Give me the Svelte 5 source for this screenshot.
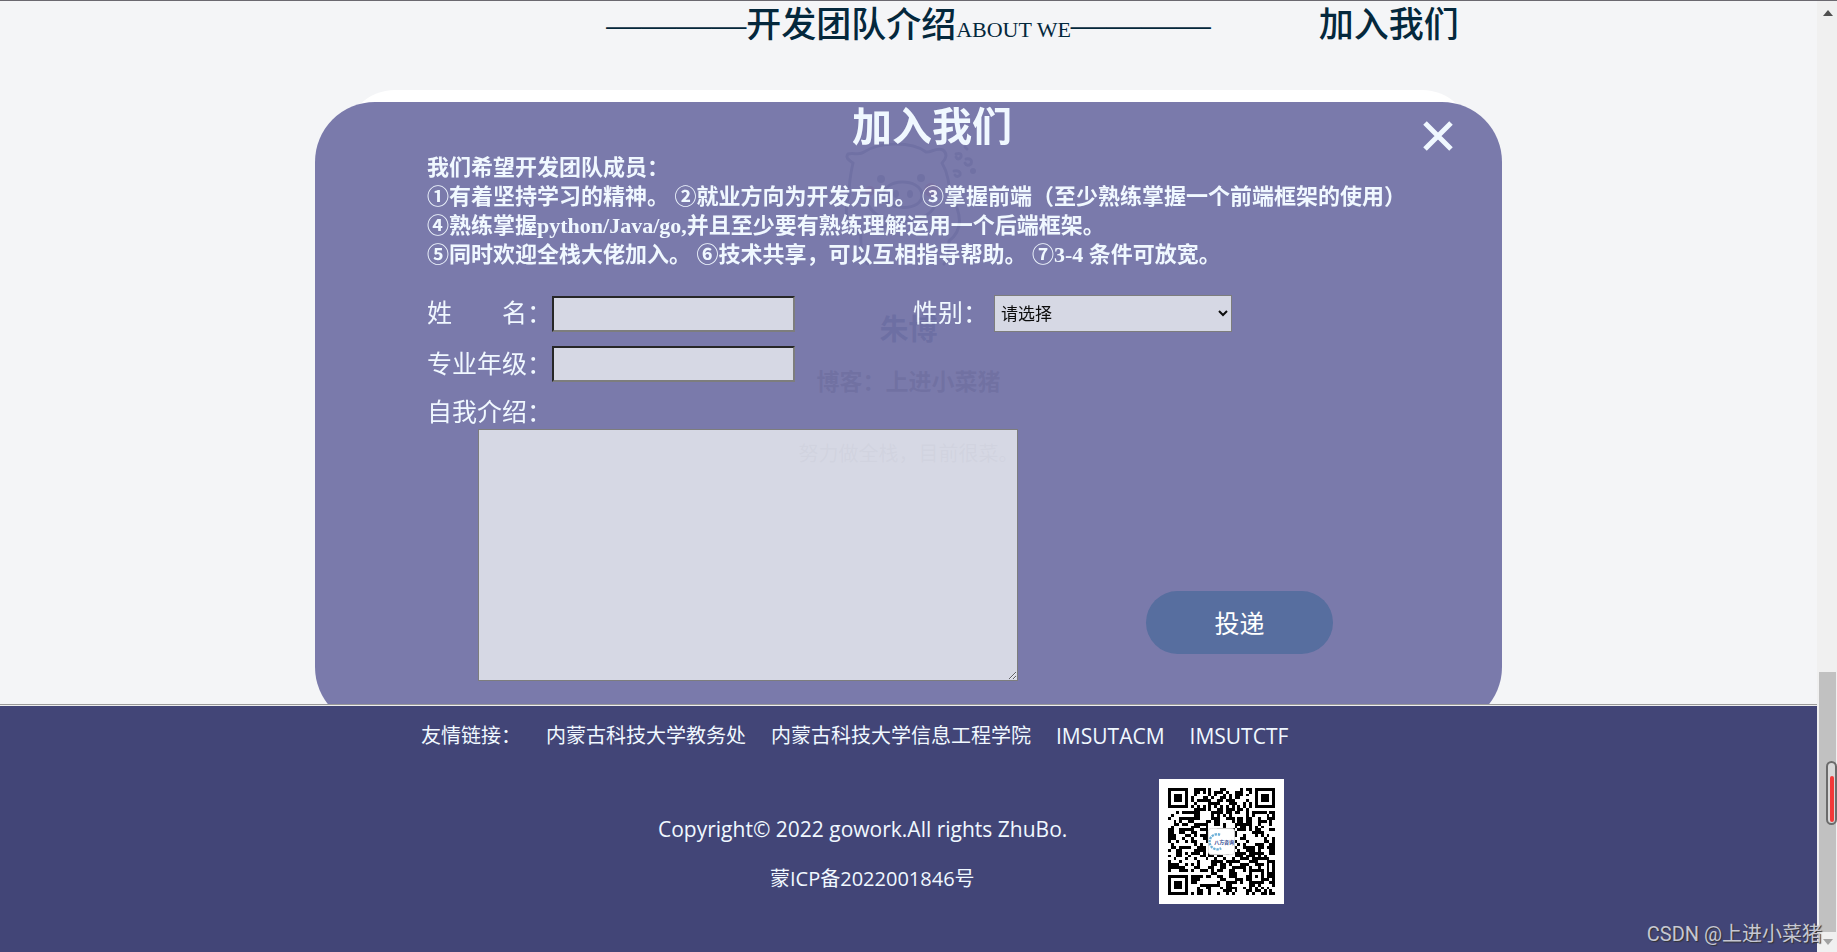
<script lang="ts">
	const links = ['内蒙古科技大学教务处', '内蒙古科技大学信息工程学院'];
	const clubs = ['IMSUTACM', 'IMSUTCTF'];

	const requirements = [
		'我们希望开发团队成员：',
		'①有着坚持学习的精神。 ②就业方向为开发方向。 ③掌握前端（至少熟练掌握一个前端框架的使用）',
		'④熟练掌握python/Java/go,并且至少要有熟练理解运用一个后端框架。',
		'⑤同时欢迎全栈大佬加入。 ⑥技术共享，可以互相指导帮助。 ⑦3-4 条件可放宽。'
	];

	const SIZE = 37;

	// square ring with a solid core, used by finder and alignment marks
	function ring(x: number, y: number, size: number) {
		const edge = x === 0 || y === 0 || x === size - 1 || y === size - 1;
		const core = x > 1 && y > 1 && x < size - 2 && y < size - 2;
		return edge || core;
	}

	function qrPath() {
		let seed = 2022001846;
		let d = '';
		for (let y = 0; y < SIZE; y++) {
			for (let x = 0; x < SIZE; x++) {
				seed = (Math.imul(seed, 1664525) + 1013904223) >>> 0;
				let on = seed >>> 16 & 1;
				const left = x < 8;
				const right = x > SIZE - 9;
				const top = y < 8;
				const bottom = y > SIZE - 9;
				if ((top && (left || right)) || (bottom && left)) {
					const fx = right ? x - (SIZE - 7) : x;
					const fy = bottom ? y - (SIZE - 7) : y;
					on = fx >= 0 && fx < 7 && fy >= 0 && fy < 7 && ring(fx, fy, 7) ? 1 : 0;
				} else if (x >= 28 && x <= 32 && y >= 28 && y <= 32) {
					on = ring(x - 28, y - 28, 5) ? 1 : 0;
				} else if (x === 6 || y === 6) {
					on = (x + y) % 2 ? 0 : 1;
				}
				if (on) d += `M${x} ${y}h1v1h-1z`;
			}
		}
		return d;
	}

	const qr = qrPath();

	let open = $state(true);
</script>

<div class="window">
	<div class="page">
		<main class="stage">
			<header class="heading">
				<h2>————开发团队介绍<small>ABOUT WE</small>————</h2>
				<a class="join" href="#join" onclick={() => (open = true)}>加入我们</a>
			</header>

			<section class="card">
				<svg class="avatar" width="140" height="140" viewBox="0 0 140 140" fill="none" aria-hidden="true">
					<g stroke="#1c2050" stroke-width="3" stroke-linecap="round" stroke-linejoin="round">
						<path d="M14 33C10 30 6 28 9 24C15 22 20 26 25 22C40 12 72 11 87 22C92 23 97 17 104 20C109 24 107 29 103 33C109 43 110 54 111 64C124 85 123 101 110 111C110 122 109 130 105 134M14 33C11 46 10 56 10 65C4 84 8 99 22 105C21 119 24 130 29 134" />
						<path d="M45 66C43 48 82 47 83 65C84 81 47 82 45 66Z" />
						<path d="M30 76C40 96 84 98 96 76M28 96C38 104 45 99 49 92" />
						<path d="M117 24q6-2 5 3q-3 4-5 0M127 29q7-1 5 5q-4 3-6-1M115 41q7-1 6 4q-3 3-5 0M126 17l2 2" />
					</g>
					<g fill="#1c2050">
						<circle cx="42" cy="49" r="4" />
						<circle cx="82" cy="48" r="4" />
						<ellipse cx="57" cy="64" rx="3" ry="4" />
						<ellipse cx="71" cy="64" rx="3" ry="4" />
						<circle cx="134" cy="41" r="3" />
					</g>
					<g fill="#e0405a">
						<circle cx="92" cy="60" r="7" />
						<circle cx="31" cy="61" r="5" />
					</g>
				</svg>
				<h3>朱博</h3>
				<p class="blog">博客：上进小菜猪</p>
				<p class="motto">努力做全栈，目前很菜。</p>
			</section>

			{#if open}
				<section class="modal" id="join">
					<button class="close" type="button" aria-label="关闭" onclick={() => (open = false)}>
						<svg width="30" height="30" viewBox="0 0 30 30">
							<path d="M2 2L28 28M28 2L2 28" stroke="currentColor" stroke-width="5" />
						</svg>
					</button>
					<h3>加入我们</h3>
					<div class="requirements">
						{#each requirements as line}
							<p>{line}</p>
						{/each}
					</div>
					<form onsubmit={(e) => e.preventDefault()}>
						<div class="row">
							<label class="name" for="name">姓　　名：</label>
							<input id="name" type="text" />
							<label class="sex" for="sex">性别：</label>
							<select id="sex">
								<option>请选择</option>
								<option>男</option>
								<option>女</option>
							</select>
						</div>
						<div class="row">
							<label class="name" for="major">专业年级：</label>
							<input id="major" type="text" />
						</div>
						<label class="intro" for="intro">自我介绍：</label>
						<div class="send">
							<textarea id="intro"></textarea>
							<button class="submit" type="submit">投递</button>
						</div>
					</form>
				</section>
			{/if}
		</main>

		<footer>
			<nav>
				<span>友情链接：</span>
				{#each links as link}
					<a href="#top">{link}</a>
				{/each}
				{#each clubs as club}
					<a class="club" href="#top">{club}</a>
				{/each}
			</nav>
			<div class="legal">
				<div class="copy">
					<p>Copyright© 2022 gowork.All rights ZhuBo.</p>
					<p class="icp">蒙ICP备2022001846号</p>
				</div>
				<svg class="qr" width="125" height="125" viewBox="-3 -3 43 43" role="img" aria-label="二维码">
					<rect x="-3" y="-3" width="43" height="43" fill="#fff" />
					<path d={qr} fill="#000" shape-rendering="crispEdges" />
					<rect x="14" y="14" width="9" height="9" rx="1" fill="#fff" stroke="#ddd" stroke-width="0.3" />
					<path d="M18 16.2a2.6 2.6 0 1 0 .4 4.6" fill="none" stroke="#6cb0d8" stroke-width="0.8" stroke-dasharray="0.8 0.3" />
					<text x="16" y="19.3" font-size="1.7" font-weight="700" fill="#2f3f8f">八方咨询</text>
				</svg>
			</div>
		</footer>
	</div>

	<div class="scrollbar" aria-hidden="true">
		<svg class="up" width="10" height="6" viewBox="0 0 10 6"><path d="M5 0L10 6H0z" /></svg>
		<div class="thumb"></div>
		<svg class="down" width="10" height="6" viewBox="0 0 10 6"><path d="M0 0H10L5 6z" /></svg>
		<div class="gauge"><div></div></div>
	</div>

	<div class="watermark">CSDN @上进小菜猪</div>
</div>

<style>
	:global(body) {
		margin: 0;
		overflow: hidden;
	}

	.window {
		display: flex;
		position: relative;
		box-sizing: border-box;
		height: 100vh;
		border-top: 1px solid #6b6970;
		background: #f4f5f7;
		color: aliceblue;
		font-family: 'Open Sans', 'Noto Sans CJK SC', sans-serif;
	}

	h2,
	h3,
	p {
		margin: 0;
	}

	a {
		color: inherit;
		text-decoration: none;
	}

	.page {
		display: flex;
		flex: 1;
		flex-direction: column;
		min-width: 0;
	}

	.stage {
		position: relative;
		flex: 1;
		min-height: 0;
		overflow: hidden;
	}

	.heading,
	.card h3,
	.modal {
		font-family: 'Liberation Serif', STXingkai, KaiTi, 'Noto Sans CJK SC', serif;
	}

	.heading {
		display: grid;
		grid-template-columns: 1fr auto 1fr;
		height: 89px;
		color: #04283c;
		font-size: 35px;
		font-weight: 500;
		line-height: 50px;
	}

	.heading h2 {
		grid-column: 2;
		font-size: inherit;
		font-weight: inherit;
	}

	.heading small {
		font-size: 22px;
	}

	.join {
		padding-left: 108px;
	}

	.card {
		display: flex;
		flex-direction: column;
		align-items: center;
		box-sizing: border-box;
		width: 62%;
		height: 499px;
		margin: 0 auto;
		padding-top: 40px;
		border-radius: 50px;
		background: #fff;
		color: #555;
	}

	.avatar {
		opacity: 0.8;
	}

	.card h3 {
		margin-top: 40px;
		color: #04285c;
		font-size: 29px;
		line-height: 40px;
	}

	.blog {
		margin-top: 16px;
		font-size: 23px;
		font-weight: 700;
		line-height: 30px;
	}

	.motto {
		margin-top: 43px;
		color: #999;
		font-size: 20px;
		line-height: 30px;
	}

	.modal {
		position: absolute;
		top: 101px;
		right: 0;
		left: 0;
		box-sizing: border-box;
		width: 1187px;
		max-width: 96%;
		height: 625px;
		margin: 0 auto;
		padding: 0 65px 0 112px;
		border-radius: 60px;
		background: #7373a7;
		opacity: 0.95;
	}

	.modal h3 {
		font-size: 40px;
		line-height: 51px;
		text-align: center;
	}

	.close {
		position: absolute;
		top: 19px;
		right: 49px;
		width: 30px;
		height: 30px;
		padding: 0;
		border: 0;
		background: none;
		color: aliceblue;
		cursor: pointer;
	}

	.close svg {
		display: block;
	}

	.requirements {
		margin-bottom: 26px;
		font-size: 22px;
		font-weight: 700;
		line-height: 29px;
	}

	.row {
		display: flex;
		align-items: center;
		margin-bottom: 14px;
	}

	label {
		font-size: 25px;
		line-height: 33px;
	}

	.name {
		width: 125px;
	}

	.sex {
		width: 81px;
		margin-left: 118px;
	}

	.intro {
		display: block;
	}

	input,
	select,
	textarea {
		box-sizing: border-box;
		border: 1px solid #767676;
		border-radius: 0;
		background: #d4d6e3;
		color: #000;
		font-family: 'Open Sans', 'Noto Sans CJK SC', sans-serif;
		font-size: 17px;
	}

	input {
		width: 243px;
		height: 36px;
		border-width: 2px;
		border-color: #1c1c1c #767676 #767676 #1c1c1c;
	}

	select {
		width: 238px;
		height: 37px;
		padding: 0 2px;
	}

	.send {
		display: flex;
		align-items: center;
		gap: 128px;
		padding-left: 51px;
	}

	textarea {
		width: 540px;
		height: 252px;
	}

	.submit {
		width: 187px;
		height: 63px;
		margin-top: 134px;
		border: 0;
		border-radius: 32px;
		background: #4e679a;
		color: #fff;
		font-family: 'Open Sans', 'Noto Sans CJK SC', sans-serif;
		font-size: 25px;
		cursor: pointer;
	}

	footer {
		box-sizing: border-box;
		height: 248px;
		padding: 16px 0 0 421px;
		border-top: 1px solid #999;
		background: #424577;
		box-shadow: inset 0 1px #eee;
		font-size: 20px;
	}

	nav {
		display: flex;
		gap: 25px;
		line-height: 30px;
	}

	.club {
		font-size: 21px;
	}

	.legal {
		display: flex;
		margin-top: 28px;
	}

	.copy {
		box-sizing: border-box;
		width: 738px;
		padding: 35px 0 0 237px;
		font-size: 21px;
		line-height: 30px;
		white-space: nowrap;
	}

	.icp {
		margin-top: 20px;
		padding-left: 112px;
		font-size: 20px;
	}

	.qr {
		display: block;
	}

	.qr text {
		font-family: 'Noto Sans CJK SC', sans-serif;
	}

	.scrollbar {
		display: flex;
		position: relative;
		flex-direction: column;
		align-items: center;
		box-sizing: border-box;
		width: 20px;
		padding: 9px 1px 7px 2px;
		background: #f0f0f0;
	}

	.up {
		fill: #505050;
	}

	.down {
		margin-top: 7px;
		fill: #a3a3a3;
	}

	.thumb {
		width: 17px;
		height: 260px;
		margin-top: auto;
		background: #c1c1c1;
	}

	.gauge {
		display: flex;
		position: absolute;
		right: 0;
		bottom: 127px;
		align-items: flex-end;
		justify-content: center;
		box-sizing: border-box;
		width: 11px;
		height: 64px;
		padding-bottom: 1px;
		border: 2px solid #6b6b6b;
		border-radius: 6px;
		background: #d8d8d8;
	}

	.gauge div {
		width: 4px;
		height: 46px;
		border-radius: 2px;
		background: #f23a3a;
	}

	.watermark {
		position: absolute;
		right: 15px;
		bottom: 4px;
		color: #c6c7d2;
		font-family: Roboto, 'Noto Sans CJK SC', sans-serif;
		font-size: 20px;
		line-height: 28px;
		text-shadow: 1px 1px 1px #333;
	}
</style>
